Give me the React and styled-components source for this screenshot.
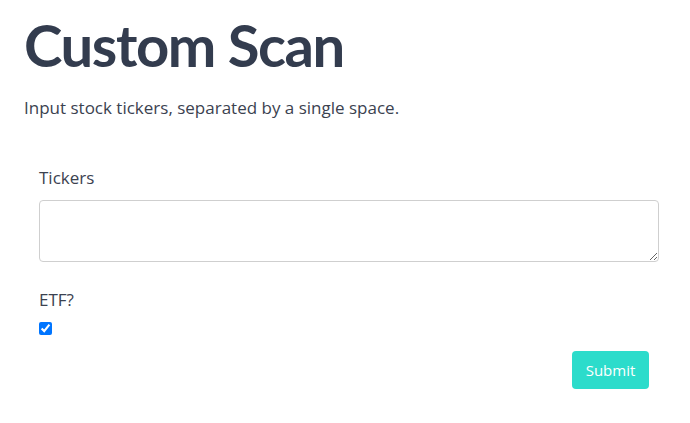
import React from 'react';
import styled, { createGlobalStyle } from 'styled-components';

const GlobalStyle = createGlobalStyle`
  body {
    margin: 0;
    background: #fff;
    font-family: "Open Sans", "Noto Sans", sans-serif;
    color: #363d4a;
  }
`;

const Page = styled.div`
  padding: 12px 16px 0 24px;
`;

const Title = styled.h1`
  font-family: Lato, Roboto, sans-serif;
  font-size: 58px;
  font-weight: 700;
  color: #333c4e;
  margin: 0;
  line-height: 66px;
  letter-spacing: -1.4px;
`;

const Lead = styled.p`
  font-size: 17px;
  color: #3b4250;
  margin: 18px 0 0 0;
  line-height: 24px;
`;

const Form = styled.form`
  padding: 46px 15px 0 15px;
  display: flex;
  flex-direction: column;
`;

const Label = styled.label`
  display: block;
  font-size: 17px;
  line-height: 24px;
  color: #3b4250;
  margin-bottom: 10px;
`;

const Field = styled.div`
  margin-bottom: ${p => p.gap || 0}px;
`;

const TextArea = styled.textarea`
  display: block;
  box-sizing: border-box;
  width: 100%;
  height: 62px;
  border: 1px solid #cfcfcf;
  border-radius: 4px;
  padding: 6px 12px;
  font-family: inherit;
  font-size: 16px;
  resize: vertical;
`;

const Check = styled.input`
  display: block;
  margin: 0;
  width: 13px;
  height: 13px;
  accent-color: #0075ff;
`;

const Actions = styled.div`
  display: flex;
  justify-content: flex-end;
  padding-right: 10px;
  margin-top: 16px;
`;

const Button = styled.button`
  background: #2cdccb;
  color: #fff;
  border: none;
  border-radius: 4px;
  width: 77px;
  height: 38px;
  font-family: inherit;
  font-size: 15px;
  cursor: pointer;
`;

export default function App() {
  return (
    <Page>
      <GlobalStyle />
      <Title>Custom Scan</Title>
      <Lead>Input stock tickers, separated by a single space.</Lead>
      <Form onSubmit={e => e.preventDefault()}>
        <Field gap={26}>
          <Label htmlFor="tickers">Tickers</Label>
          <TextArea id="tickers" />
        </Field>
        <Field>
          <Label htmlFor="etf">ETF?</Label>
          <Check id="etf" type="checkbox" defaultChecked />
        </Field>
        <Actions>
          <Button type="submit">Submit</Button>
        </Actions>
      </Form>
    </Page>
  );
}
